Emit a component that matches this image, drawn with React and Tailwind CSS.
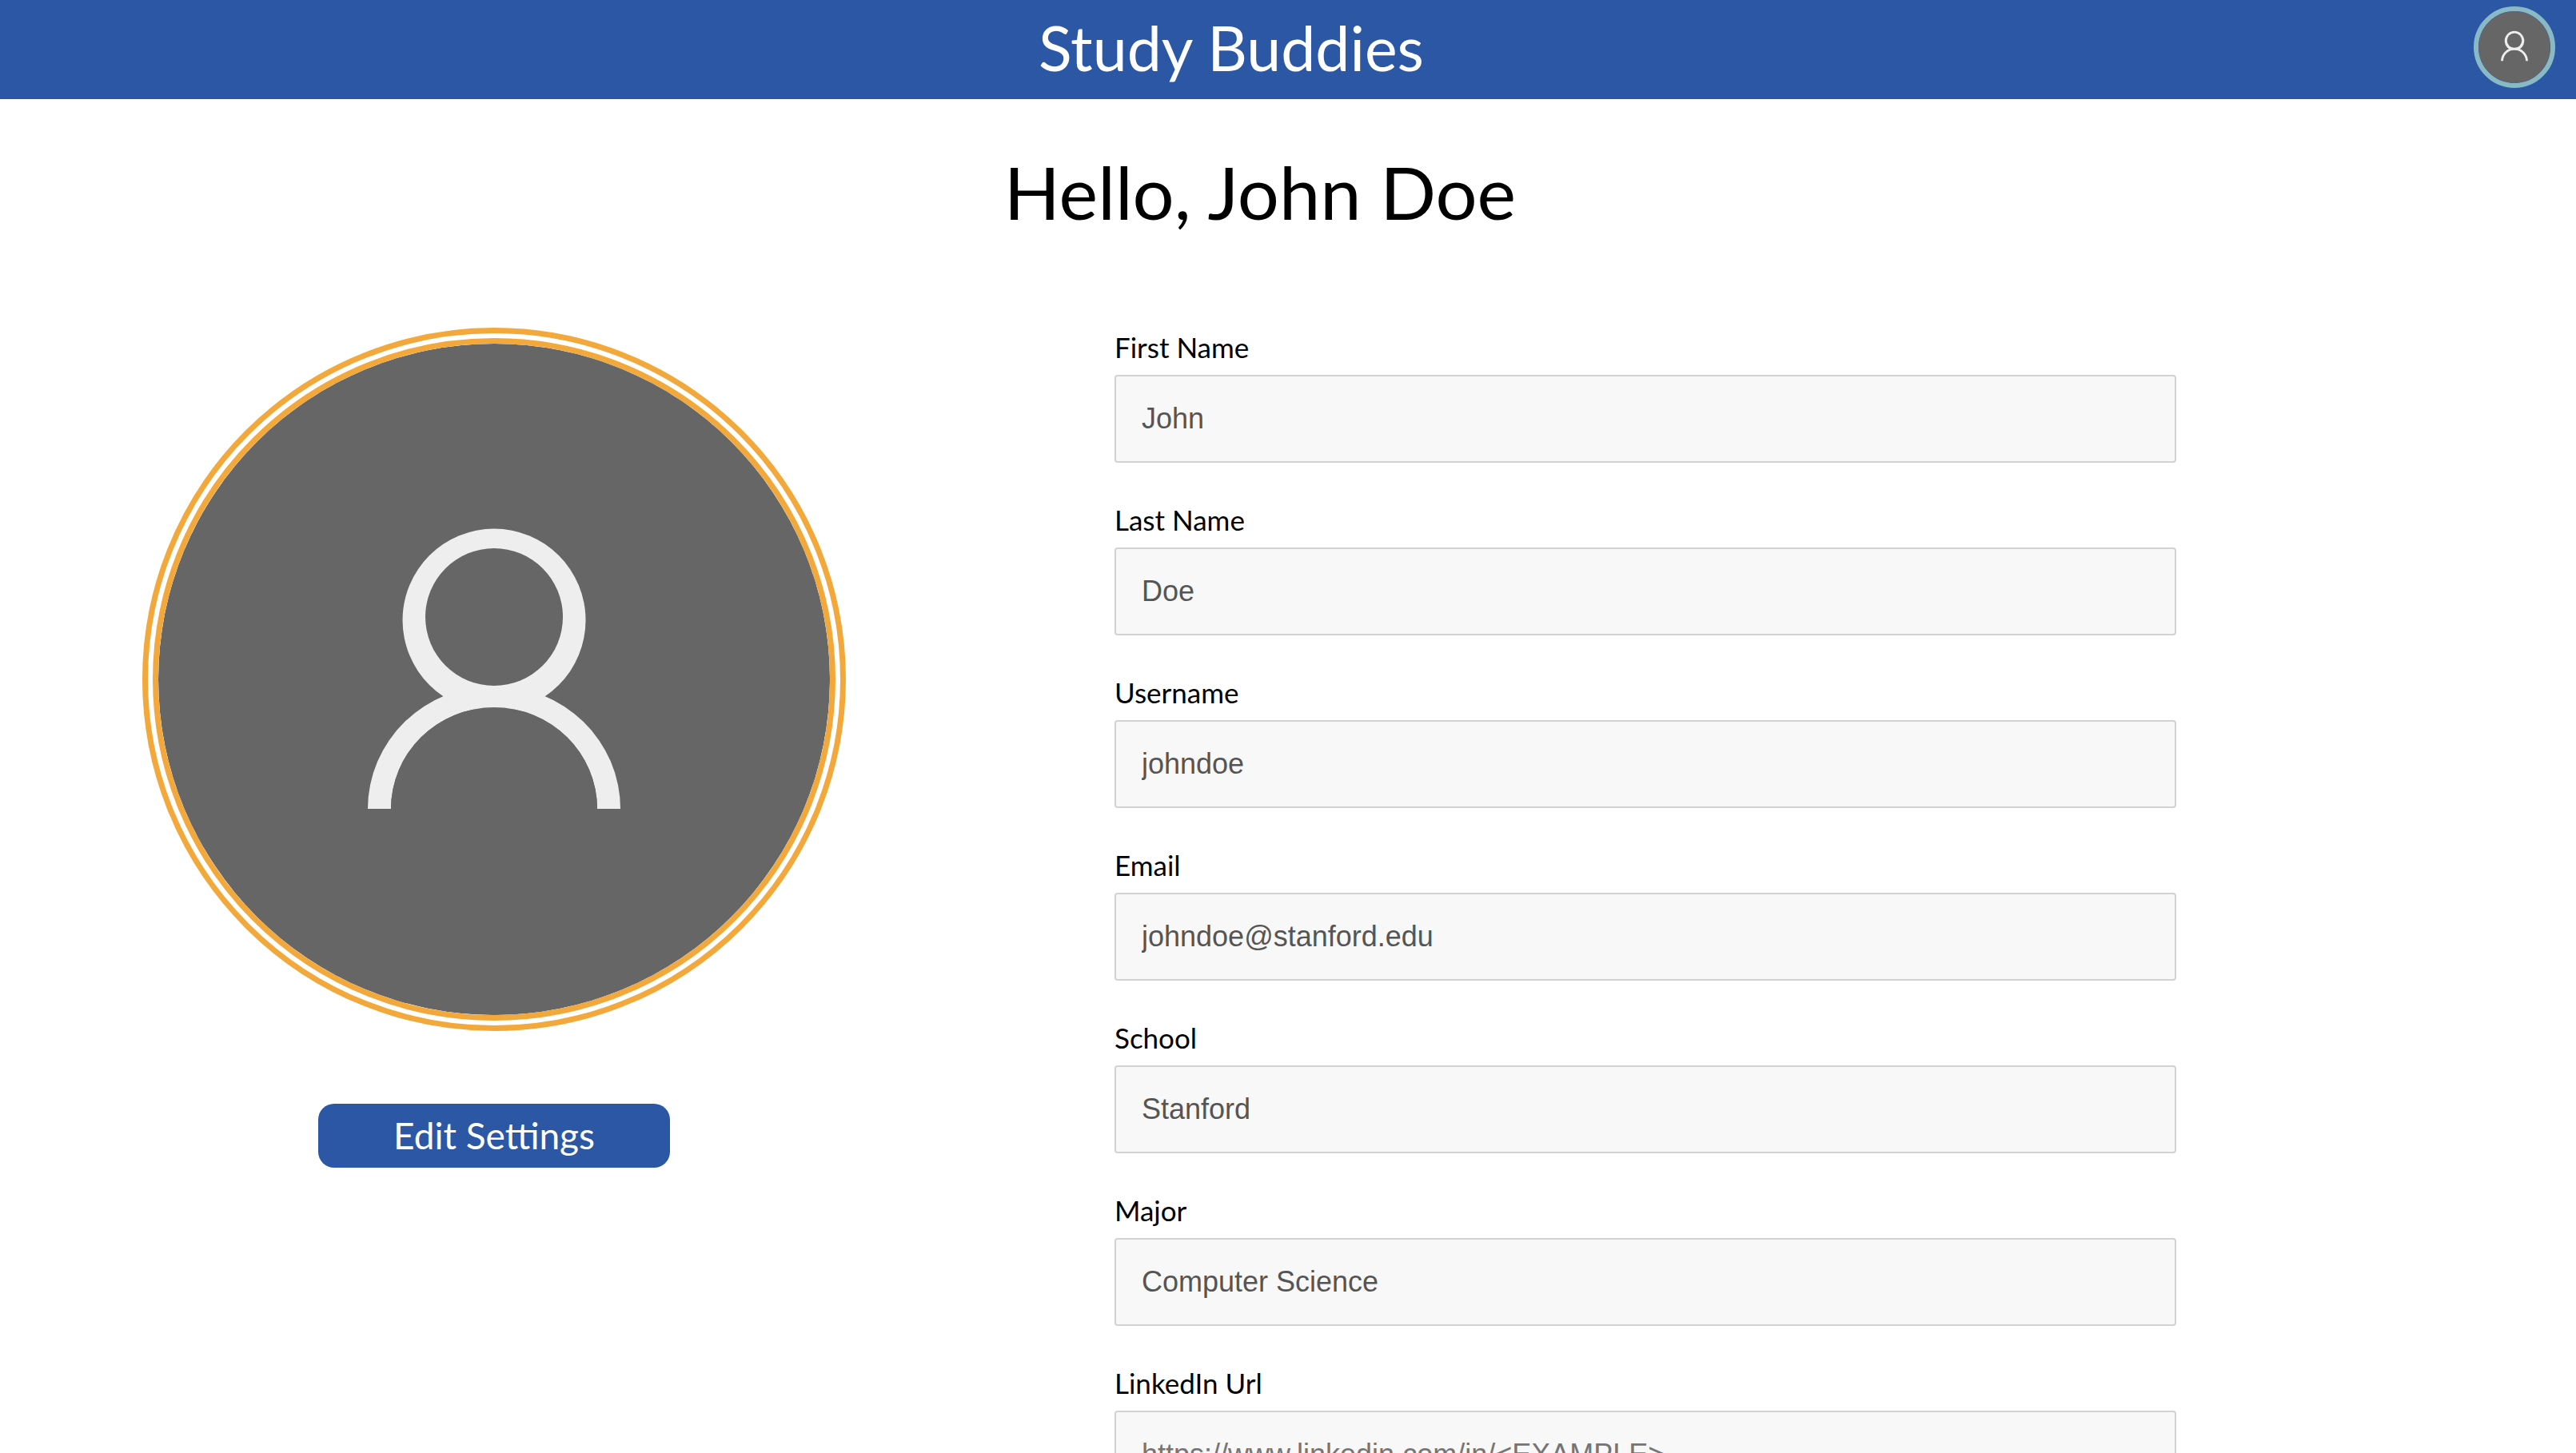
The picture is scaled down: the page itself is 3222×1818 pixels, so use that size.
const fields = [
  { id: "firstName", label: "First Name", value: "John" },
  { id: "lastName", label: "Last Name", value: "Doe" },
  { id: "username", label: "Username", value: "johndoe" },
  { id: "email", label: "Email", value: "johndoe@stanford.edu", type: "email" },
  { id: "school", label: "School", value: "Stanford" },
  { id: "major", label: "Major", value: "Computer Science" },
  {
    id: "linkedin",
    label: "LinkedIn Url",
    value: "",
    type: "url",
    placeholder: "https://www.linkedin.com/in/<EXAMPLE>",
  },
];

function PersonIcon() {
  return (
    <svg viewBox="0 0 840 840" className="block size-full" aria-hidden="true">
      <circle cx="420" cy="420" r="420" fill="#666666" />
      <path fill="#eeeeee" d="M262 582A158 154 0 0 1 578 582H549A129 127 0 0 0 291 582Z" />
      <circle cx="420" cy="346" r="114.500" fill="#eeeeee" />
      <circle cx="420" cy="342" r="86" fill="#666666" />
      <path fill="#666666" d="M291 582A129 127 0 0 1 549 582Z" />
    </svg>
  );
}

function Header() {
  return (
    <header className="flex h-[124px] items-center gap-3.5 bg-[#2b57a5] pr-[26px] pb-1.5">
      <div className="flex-1 text-center text-[77px] leading-[116px] text-white">Study Buddies</div>
      <button
        type="button"
        aria-label="Profile"
        className="size-[102px] shrink-0 overflow-hidden rounded-full border-[6px] border-[#8ab9c6]"
      >
        <PersonIcon />
      </button>
    </header>
  );
}

function Field({ id, label, value, type = "text", placeholder }) {
  return (
    <div className="flex flex-col gap-2.5">
      <label htmlFor={id} className="text-[35px] leading-[50px] text-black">
        {label}
      </label>
      <input
        id={id}
        type={type}
        defaultValue={value}
        placeholder={placeholder}
        readOnly
        className="h-[110px] w-full rounded-[4px] border-2 border-[#d2d2d2] bg-[#f8f8f8] px-8 font-['Liberation_Sans',sans-serif] text-[36px] text-[#555555] placeholder:text-[#757575]"
      />
    </div>
  );
}

export default function App() {
  return (
    <div className="min-h-screen bg-white font-['Lato',sans-serif]">
      <Header />
      <main>
        <h1 className="pt-12 pr-[70px] text-center text-[92px] leading-[136px] text-black">
          Hello, John Doe
        </h1>
        <div className="grid grid-cols-[1236fr_1986fr] pt-[101px]">
          <section className="flex flex-col items-center gap-[91px] pt-px">
            <div className="aspect-square w-[71.2%] rounded-full border-[7px] border-[#f3a83b] p-1.5">
              <div className="size-full overflow-hidden rounded-full border-[7px] border-[#f3a83b]">
                <PersonIcon />
              </div>
            </div>
            <button
              type="button"
              className="h-20 w-[440px] rounded-[20px] bg-[#2b57a5] text-[46px] leading-[70px] text-white"
            >
              Edit Settings
            </button>
          </section>
          <form className="mr-[500px] ml-[158px] flex flex-col gap-[46px]">
            {fields.map((field) => (
              <Field key={field.id} {...field} />
            ))}
          </form>
        </div>
      </main>
    </div>
  );
}
